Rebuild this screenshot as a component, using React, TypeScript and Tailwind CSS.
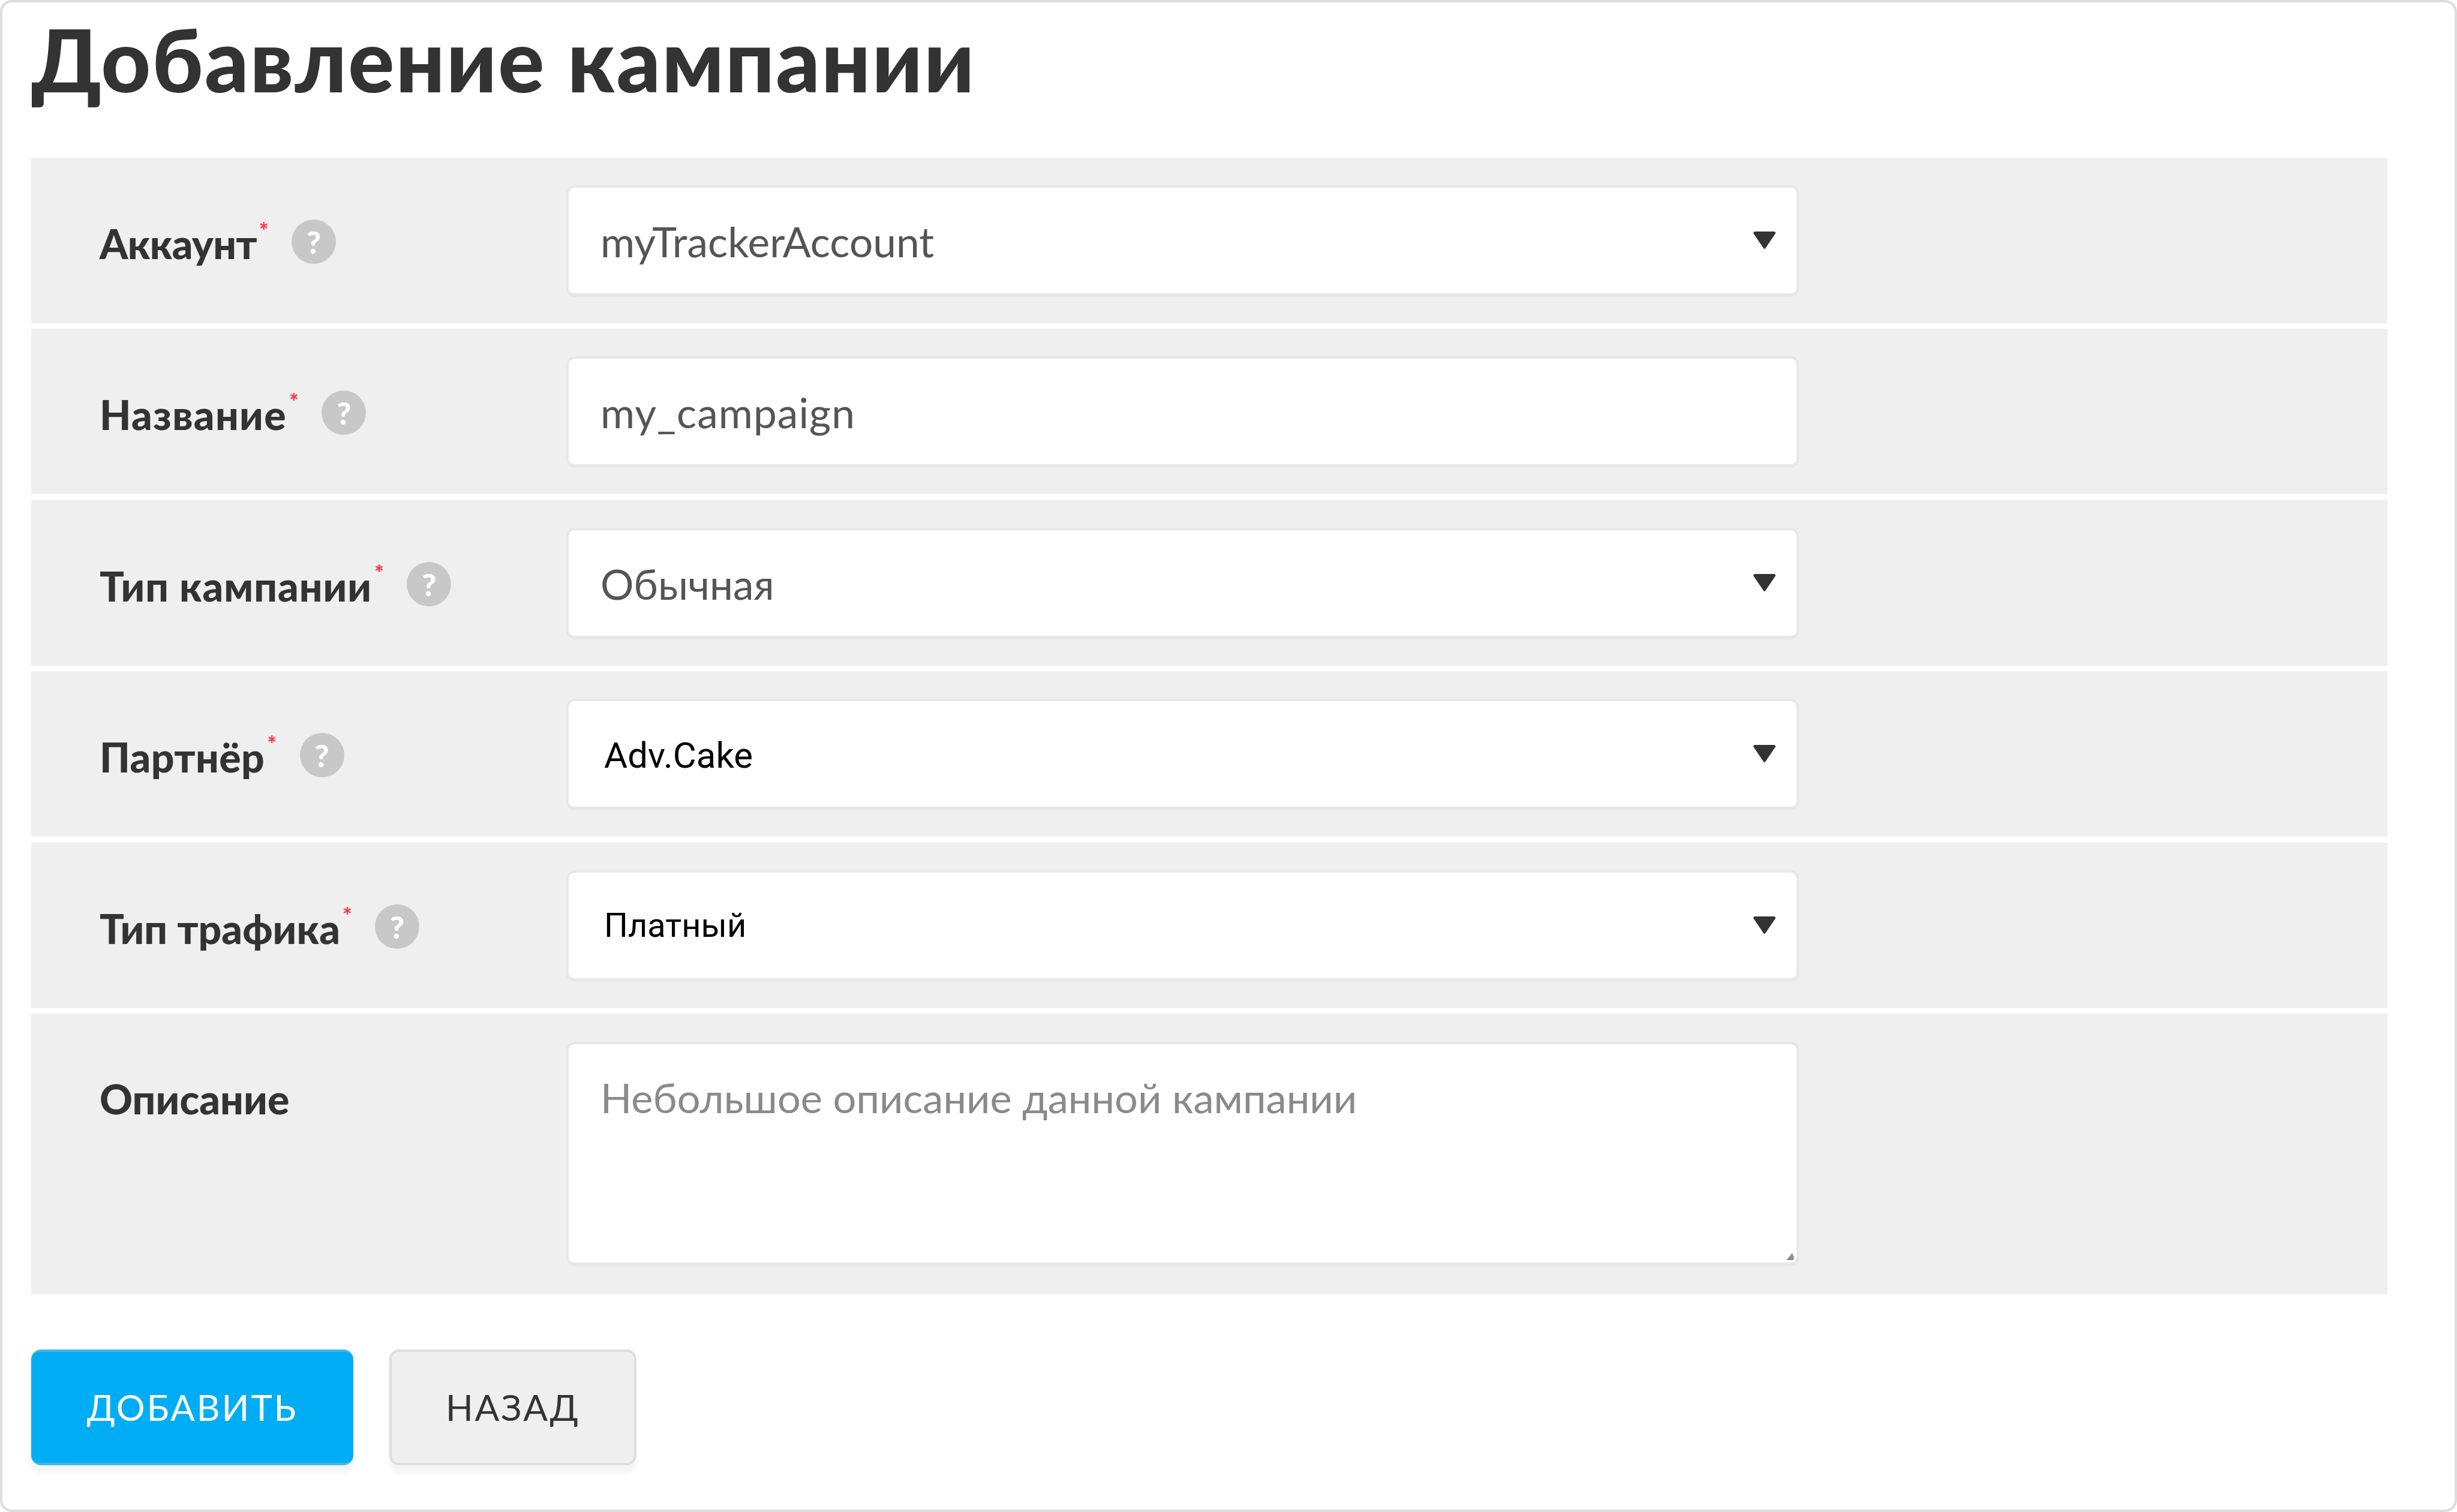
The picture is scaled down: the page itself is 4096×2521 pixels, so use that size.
import React from "react";

const rows = [
  { label: "Аккаунт", track: "tracking-[-0.7px]", value: "myTrackerAccount", select: true, valueClass: "tracking-[0px]" },
  { label: "Название", track: "tracking-[1.3px]", value: "my_campaign", select: false, valueClass: "tracking-[1px]" },
  { label: "Тип кампании", track: "tracking-[0.9px]", value: "Обычная", select: true, valueClass: "tracking-[0px]" },
  { label: "Партнёр", track: "tracking-[0.4px]", value: "Adv.Cake", select: true, plain: "pt-[6px] text-[60px]" },
  { label: "Тип трафика", track: "tracking-[0px]", value: "Платный", select: true, plain: "text-[56px]" },
];

const Arrow = () => (
  <svg className="absolute right-[34px] top-[73px] h-[30px] w-[39px]" viewBox="0 0 39 30">
    <path d="M1 3 Q1 0 4 0 L35 0 Q38 0 38 3 L21 28 Q19.5 30 18 28 Z" fill="#333333" />
  </svg>
);

const Help = () => (
  <div className="ml-[38px] mt-[4px] flex h-[74px] w-[74px] items-center justify-center rounded-full bg-[#c8c8c8] text-[52px] font-black text-white">
    ?
  </div>
);

const App = () => {
  return (
    <div className="h-[2521px] w-[4096px] rounded-[20px] border-[4.6px] border-[#dddddd] bg-white font-['Lato','Open_Sans',sans-serif] text-[#333333]">
      <h1 className="h-[259px] pl-[48px] pt-[20px] text-[144px] leading-[150px] font-black tracking-[2px]">Добавление кампании</h1>
      <div className="flex w-[3976px] flex-col gap-[9.4px] pl-[48px]">
        {rows.map((row) => (
          <div key={row.label} className="flex h-[276px] w-[3928px] items-center bg-[#efefef]">
            <div className="flex w-[892px] items-center pl-[114px] text-[68px] font-black">
              <span className={`pt-[10px] ${row.track}`}>{row.label}</span>
              <span className="-mt-[34px] ml-[4px] text-[38px] leading-none font-bold text-[#ff3347]">*</span>
              <Help />
            </div>
            <div className="relative mt-[2px] flex h-[186px] w-[2055px] items-center rounded-[14px] border-[4px] border-b-[6px] border-[#e7e7e7] bg-white pl-[53px]">
              {row.plain ? (
                <span className={`pl-[6px] font-['Roboto',sans-serif] text-black ${row.plain}`}>{row.value}</span>
              ) : (
                <span className={`pt-[2px] text-[69.5px] text-[#555555] ${row.valueClass}`}>{row.value}</span>
              )}
              {row.select && <Arrow />}
            </div>
          </div>
        ))}
        <div className="flex h-[468px] w-[3928px] items-start bg-[#efefef] pt-[47px]">
          <div className="flex h-[128px] w-[892px] items-center pl-[114px] pt-[62px] text-[68px] font-black">Описание</div>
          <div className="relative h-[374px] w-[2055px] rounded-[14px] border-[4px] border-b-[6px] border-[#e7e7e7] bg-white pl-[53px] pt-[41px]">
            <span className="text-[68.6px] leading-[96px] text-[#8a8a8a]">Небольшое описание данной кампании</span>
            <svg className="absolute bottom-[3px] right-[3px] h-[16px] w-[16px]" viewBox="0 0 16 16">
              <path d="M2 15 L12 3 L15 12 L13 15 Z" fill="#8c8c8c" />
            </svg>
          </div>
        </div>
      </div>
      <div className="mt-[92px] flex gap-[60px] pl-[48px]">
        <button
          type="button"
          className="h-[193px] w-[537px] rounded-[16px] border-y-[4px] border-[#45b6e4] bg-[#00adf5] text-[60px] tracking-[3px] text-white shadow-[0_14px_8px_#f4f6f7]"
        >
          ДОБАВИТЬ
        </button>
        <button
          type="button"
          className="h-[193px] w-[412px] rounded-[16px] border-[4px] border-[#dedede] bg-[#efefef] text-[60px] tracking-[3px] text-[#333333] shadow-[0_14px_8px_#f5f5f5]"
        >
          НАЗАД
        </button>
      </div>
    </div>
  );
};

export default App;
